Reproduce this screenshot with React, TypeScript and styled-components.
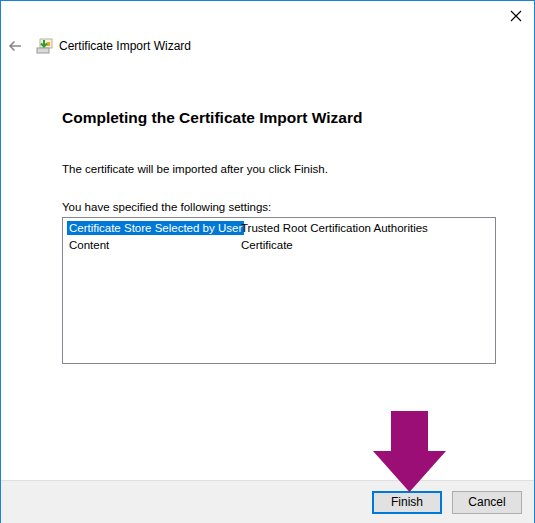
import styled, { createGlobalStyle } from "styled-components";

const Global = createGlobalStyle`
    html, body { margin: 0; padding: 0; background: #fff; }
    body { font-family: "Liberation Sans", Arial, sans-serif; font-size: 11.5px; color: #000; }
`;

const Window = styled.div`
    position: relative;
    width: 535px;
    height: 523px;
    box-sizing: border-box;
    border: 1px solid #1883d7;
    border-bottom: none;
    display: flex;
    flex-direction: column;
    background: #fff;
    overflow: hidden;
`;

const TitleBar = styled.div`
    height: 29px;
    display: flex;
    justify-content: flex-end;
`;

const CloseButton = styled.div`
    width: 36px;
    display: flex;
    align-items: center;
    justify-content: center;
`;

const NavRow = styled.div`
    display: flex;
    align-items: center;
    height: 32px;
    padding-left: 7px;
    font-size: 12px;
    color: #000;
`;

const Body = styled.div`
    flex: 1;
    padding: 0 38px 0 61px;
    display: flex;
    flex-direction: column;
`;

const Heading = styled.h1`
    margin: 47px 0 0;
    font-size: 15.5px;
    font-weight: 700;
    color: #000;
`;

const Text = styled.p<{ $top: number }>`
    margin: ${(p) => p.$top}px 0 0;
    font-size: 11.5px;
    line-height: 15px;
`;

const ListBox = styled.div`
    margin-top: 2px;
    height: 147px;
    border: 1px solid #828790;
    padding: 1px 5px;
    box-sizing: border-box;
`;

const Row = styled.div`
    display: grid;
    grid-template-columns: 172px 1fr;
    height: 17px;
    align-items: center;
    white-space: nowrap;
`;

const Cell = styled.span<{ $selected?: boolean }>`
    justify-self: start;
    padding: 1px 2px;
    margin-left: -1px;
    background: ${(p) => (p.$selected ? "#0078d7" : "transparent")};
    color: ${(p) => (p.$selected ? "#fff" : "#000")};
`;

const Footer = styled.div`
    height: 42px;
    background: #f0f0f0;
    border-top: 1px solid #dfdfdf;
    display: flex;
    justify-content: flex-end;
    align-items: center;
    gap: 10px;
    padding-right: 12px;
`;

const Button = styled.button<{ $default?: boolean }>`
    width: 70px;
    height: 23px;
    font-family: inherit;
    font-size: 12px;
    background: #e1e1e1;
    border: ${(p) => (p.$default ? "2px solid #0078d7" : "1px solid #adadad")};
    padding: 0;
`;

const Arrow = styled.svg`
    position: absolute;
    left: 371px;
    top: 410px;
`;

export default function App() {
    return (
        <>
            <Global />
            <Window>
                <TitleBar>
                    <CloseButton>
                        <svg width="12" height="12" viewBox="0 0 12 12">
                            <path d="M1 1L11 11M11 1L1 11" stroke="#000" strokeWidth="1.1" />
                        </svg>
                    </CloseButton>
                </TitleBar>
                <NavRow>
                    <svg width="14" height="12" viewBox="0 0 14 12">
                        <path d="M13 6H2M6.5 1.5L2 6l4.5 4.5" stroke="#888" strokeWidth="1.6" fill="none" />
                    </svg>
                    <svg width="17" height="16" viewBox="0 0 17 16" style={{ marginLeft: 14, marginRight: 6 }}>
                        <rect x="4" y="1" width="12" height="9" fill="#f3f0e4" stroke="#b8b39a" />
                        <rect x="11" y="4" width="3" height="4" fill="#e8a820" />
                        <rect x="1" y="10" width="12" height="5" fill="#d9d9d9" stroke="#999" />
                        <path d="M8 2v6M5 5.5L8 8.5l3-3" stroke="#2a9d2a" strokeWidth="2" fill="none" />
                    </svg>
                    Certificate Import Wizard
                </NavRow>
                <Body>
                    <Heading>Completing the Certificate Import Wizard</Heading>
                    <Text $top={35}>The certificate will be imported after you click Finish.</Text>
                    <Text $top={23}>You have specified the following settings:</Text>
                    <ListBox>
                        <Row>
                            <Cell $selected>Certificate Store Selected by User</Cell>
                            <Cell>Trusted Root Certification Authorities</Cell>
                        </Row>
                        <Row>
                            <Cell>Content</Cell>
                            <Cell>Certificate</Cell>
                        </Row>
                    </ListBox>
                </Body>
                <Footer>
                    <Button $default>Finish</Button>
                    <Button>Cancel</Button>
                </Footer>
                <Arrow width="76" height="82" viewBox="0 0 76 82">
                    <path d="M19 0H56V40H74L37.5 81L1 40H19Z" fill="#9b0e75" />
                </Arrow>
            </Window>
        </>
    );
}
